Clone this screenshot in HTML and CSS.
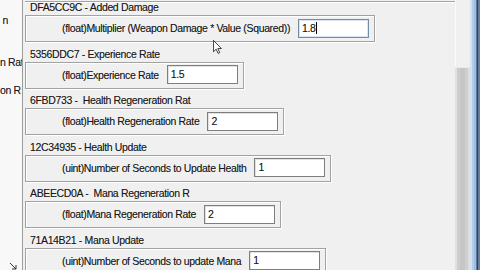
FILE: index.html
```html
<!DOCTYPE html>
<html>
<head>
<meta charset="utf-8">
<link rel="stylesheet" href="styles.css">
</head>
<body>
<div class="window">
  <div class="side">
    <div class="side-line l1">n</div>
    <div class="side-line l2">n Rat</div>
    <div class="side-line l3">on R</div>
    <svg class="resize" viewBox="0 0 8 8" width="8" height="8"><path d="M1 1 L7 7 M7 3 L7 7 L3 7" fill="none" stroke="#333" stroke-width="1"/></svg>
  </div>
  <div class="list">
    <div class="prev-edge"></div>
    <div class="entry">
      <div class="title">DFA5CC9C - Added Damage</div>
      <div class="box"><span class="label">(float)Multiplier (Weapon Damage * Value (Squared))</span><div class="input focus">1.8<span class="caret"></span></div></div>
    </div>
    <div class="entry">
      <div class="title">5356DDC7 - Experience Rate</div>
      <div class="box"><span class="label">(float)Experience Rate</span><div class="input">1.5</div></div>
    </div>
    <div class="entry">
      <div class="title">6FBD733 - &nbsp;Health Regeneration Rat</div>
      <div class="box"><span class="label">(float)Health Regeneration Rate</span><div class="input">2</div></div>
    </div>
    <div class="entry">
      <div class="title">12C34935 - Health Update</div>
      <div class="box"><span class="label">(uint)Number of Seconds to Update Health</span><div class="input">1</div></div>
    </div>
    <div class="entry">
      <div class="title">ABEECD0A - &nbsp;Mana Regeneration R</div>
      <div class="box"><span class="label">(float)Mana Regeneration Rate</span><div class="input">2</div></div>
    </div>
    <div class="entry">
      <div class="title">71A14B21 - Mana Update</div>
      <div class="box"><span class="label">(uint)Number of Seconds to update Mana</span><div class="input">1</div></div>
    </div>
  </div>
  <div class="scrollbar"><div class="track"></div><div class="thumb"></div></div>
  <div class="frame"></div>
  <svg class="cursor" viewBox="0 0 12 19" width="9" height="14"><path d="M0.5 0.5 L0.5 16 L4.2 12.4 L6.8 18.2 L9 17.2 L6.5 11.6 L11.3 11.6 Z" fill="#fff" stroke="#000" stroke-width="1"/></svg>
</div>
</body>
</html>
```
FILE: styles.css
```css
html, body {
  margin: 0;
  padding: 0;
  width: 480px;
  height: 270px;
  overflow: hidden;
}
body {
  font-family: "Liberation Sans", Arial, sans-serif;
  font-size: 10.5px;
  letter-spacing: -0.35px;
  color: #1a1a1a;
  text-shadow: 0 0 0.6px rgba(0, 0, 0, 0.35);
}
.window {
  position: relative;
  display: flex;
  width: 480px;
  height: 270px;
  background: #f0f0f0;
  overflow: hidden;
}
.side {
  position: relative;
  width: 22px;
  flex-shrink: 0;
  background: #f8f8f8;
  border-right: 1px solid #9c9c9c;
  overflow: hidden;
}
.side-line {
  white-space: nowrap;
  text-align: right;
  line-height: 12px;
  height: 12px;
}
.l1 { margin-top: 14px; padding-right: 14px; }
.l2 { margin-top: 30px; padding-right: 1px; }
.l3 { margin-top: 16px; padding-right: 2px; }
.resize {
  position: absolute;
  left: 9px;
  top: 262px;
}
.list {
  flex: 1;
  padding-left: 2px;
  min-width: 0;
}
.prev-edge {
  height: 1px;
  border-bottom: 1px solid #a4a4a4;
  box-shadow: 0 1px 0 #fff;
  margin-bottom: -2px;
}
.entry {
  display: flex;
  flex-direction: column;
  align-items: flex-start;
  margin-bottom: 4.6px;
}
.title {
  height: 14px;
  line-height: 15px;
  padding-left: 5px;
  white-space: nowrap;
}
.box {
  display: flex;
  align-items: center;
  box-sizing: border-box;
  height: 27px;
  margin-top: 1px;
  padding: 0 5px 1px 36px;
  gap: 8px;
  border: 1px solid #a2a2a2;
  box-shadow: inset 1px 1px 0 #fff, 1px 1px 0 #fff;
  white-space: nowrap;
}
.input {
  position: relative;
  box-sizing: border-box;
  width: 71px;
  height: 19px;
  line-height: 17px;
  padding-left: 3px;
  background: #fff;
  border: 1px solid #7e7e7e;
  box-shadow: inset 1px 1px 0 #e2e2e2;
}
.input.focus {
  border-color: #6f8ea6;
  box-shadow: inset 0 0 0 1px #d7e6f2;
}
.caret {
  display: inline-block;
  width: 1px;
  height: 12px;
  background: #000;
  vertical-align: -2px;
  margin-left: 0.5px;
}
.scrollbar {
  width: 15px;
  flex-shrink: 0;
  display: flex;
  flex-direction: column;
  background: #f0f0f0;
}
.track {
  height: 67px;
  border-left: 1px solid #fbfbfb;
}
.thumb {
  flex: 1;
  border-top: 1px solid #eaeaea;
  background: linear-gradient(to right, #e0e0e0 0 2px, #cdcdcd 2px 5px, #c6c6c6 5px 10px, #cfcfcf 10px 13px, #dedede 13px);
}
.frame {
  width: 10px;
  flex-shrink: 0;
  background: linear-gradient(to right, #d4e3f3 0 2px, #b3cce8 2px 4px, #9dbde3 4px 6px, #5d7aa0 6px 7px, #2f3f58 7px 8px, #6a7e9a 8px);
}
.cursor {
  position: absolute;
  left: 213px;
  top: 40px;
}
```
